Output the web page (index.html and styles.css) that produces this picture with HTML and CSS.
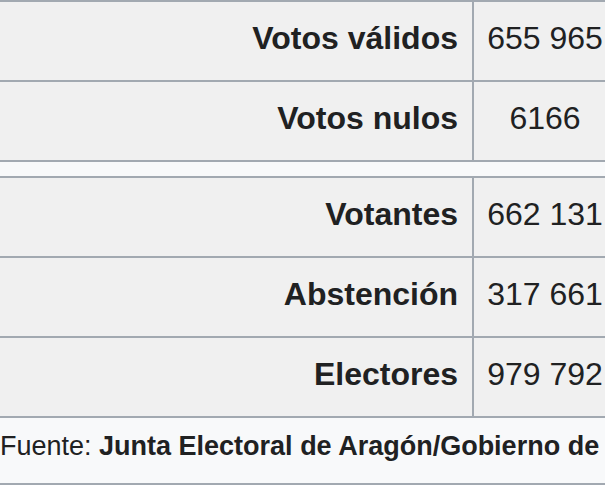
FILE: index.html
```html
<!DOCTYPE html>
<html lang="es">
<head>
<meta charset="utf-8">
<title>Resultados</title>
<link rel="stylesheet" href="styles.css">
</head>
<body>
<table class="results">
  <colgroup>
    <col class="col-label">
    <col class="col-value">
  </colgroup>
  <tbody>
    <tr>
      <th class="label">Votos válidos</th>
      <td class="value">655 965</td>
    </tr>
    <tr>
      <th class="label">Votos nulos</th>
      <td class="value">6166</td>
    </tr>
    <tr class="sep">
      <td colspan="2"></td>
    </tr>
    <tr>
      <th class="label">Votantes</th>
      <td class="value">662 131</td>
    </tr>
    <tr>
      <th class="label">Abstención</th>
      <td class="value">317 661</td>
    </tr>
    <tr>
      <th class="label">Electores</th>
      <td class="value">979 792</td>
    </tr>
    <tr>
      <td class="source" colspan="2">Fuente: <b>Junta Electoral de Aragón/Gobierno de</b></td>
    </tr>
  </tbody>
</table>
</body>
</html>
```

FILE: styles.css
```css
html, body {
  margin: 0;
  padding: 0;
  background: #ffffff;
}

.results {
  table-layout: fixed;
  width: 605px;
  border-collapse: separate;
  border-spacing: 0;
  border-top: 2px solid #a2a9b1;
  font-family: "Liberation Sans", Arial, sans-serif;
  color: #202122;
}

.col-label { width: 474px; }
.col-value { width: 131px; }

.results th,
.results td {
  box-sizing: border-box;
  border-bottom: 2px solid #a2a9b1;
  padding: 0;
}

.results .label {
  background: #f0f0f0;
  font-size: 32px;
  font-weight: bold;
  line-height: 37px;
  text-align: right;
  padding: 18px 14px 23px 0;
  border-right: 2px solid #a2a9b1;
  white-space: nowrap;
}

.results .value {
  background: #f0f0f0;
  font-size: 32px;
  font-weight: normal;
  line-height: 37px;
  text-align: center;
  padding: 18px 0 23px 11px;
  white-space: nowrap;
}

.sep td {
  background: #f8f9fa;
  height: 16px;
  line-height: 0;
  font-size: 0;
}

.results .source {
  background: #f8f9fa;
  font-size: 27px;
  line-height: 31px;
  text-align: left;
  padding: 13px 0 21px 0;
  white-space: nowrap;
}
```
